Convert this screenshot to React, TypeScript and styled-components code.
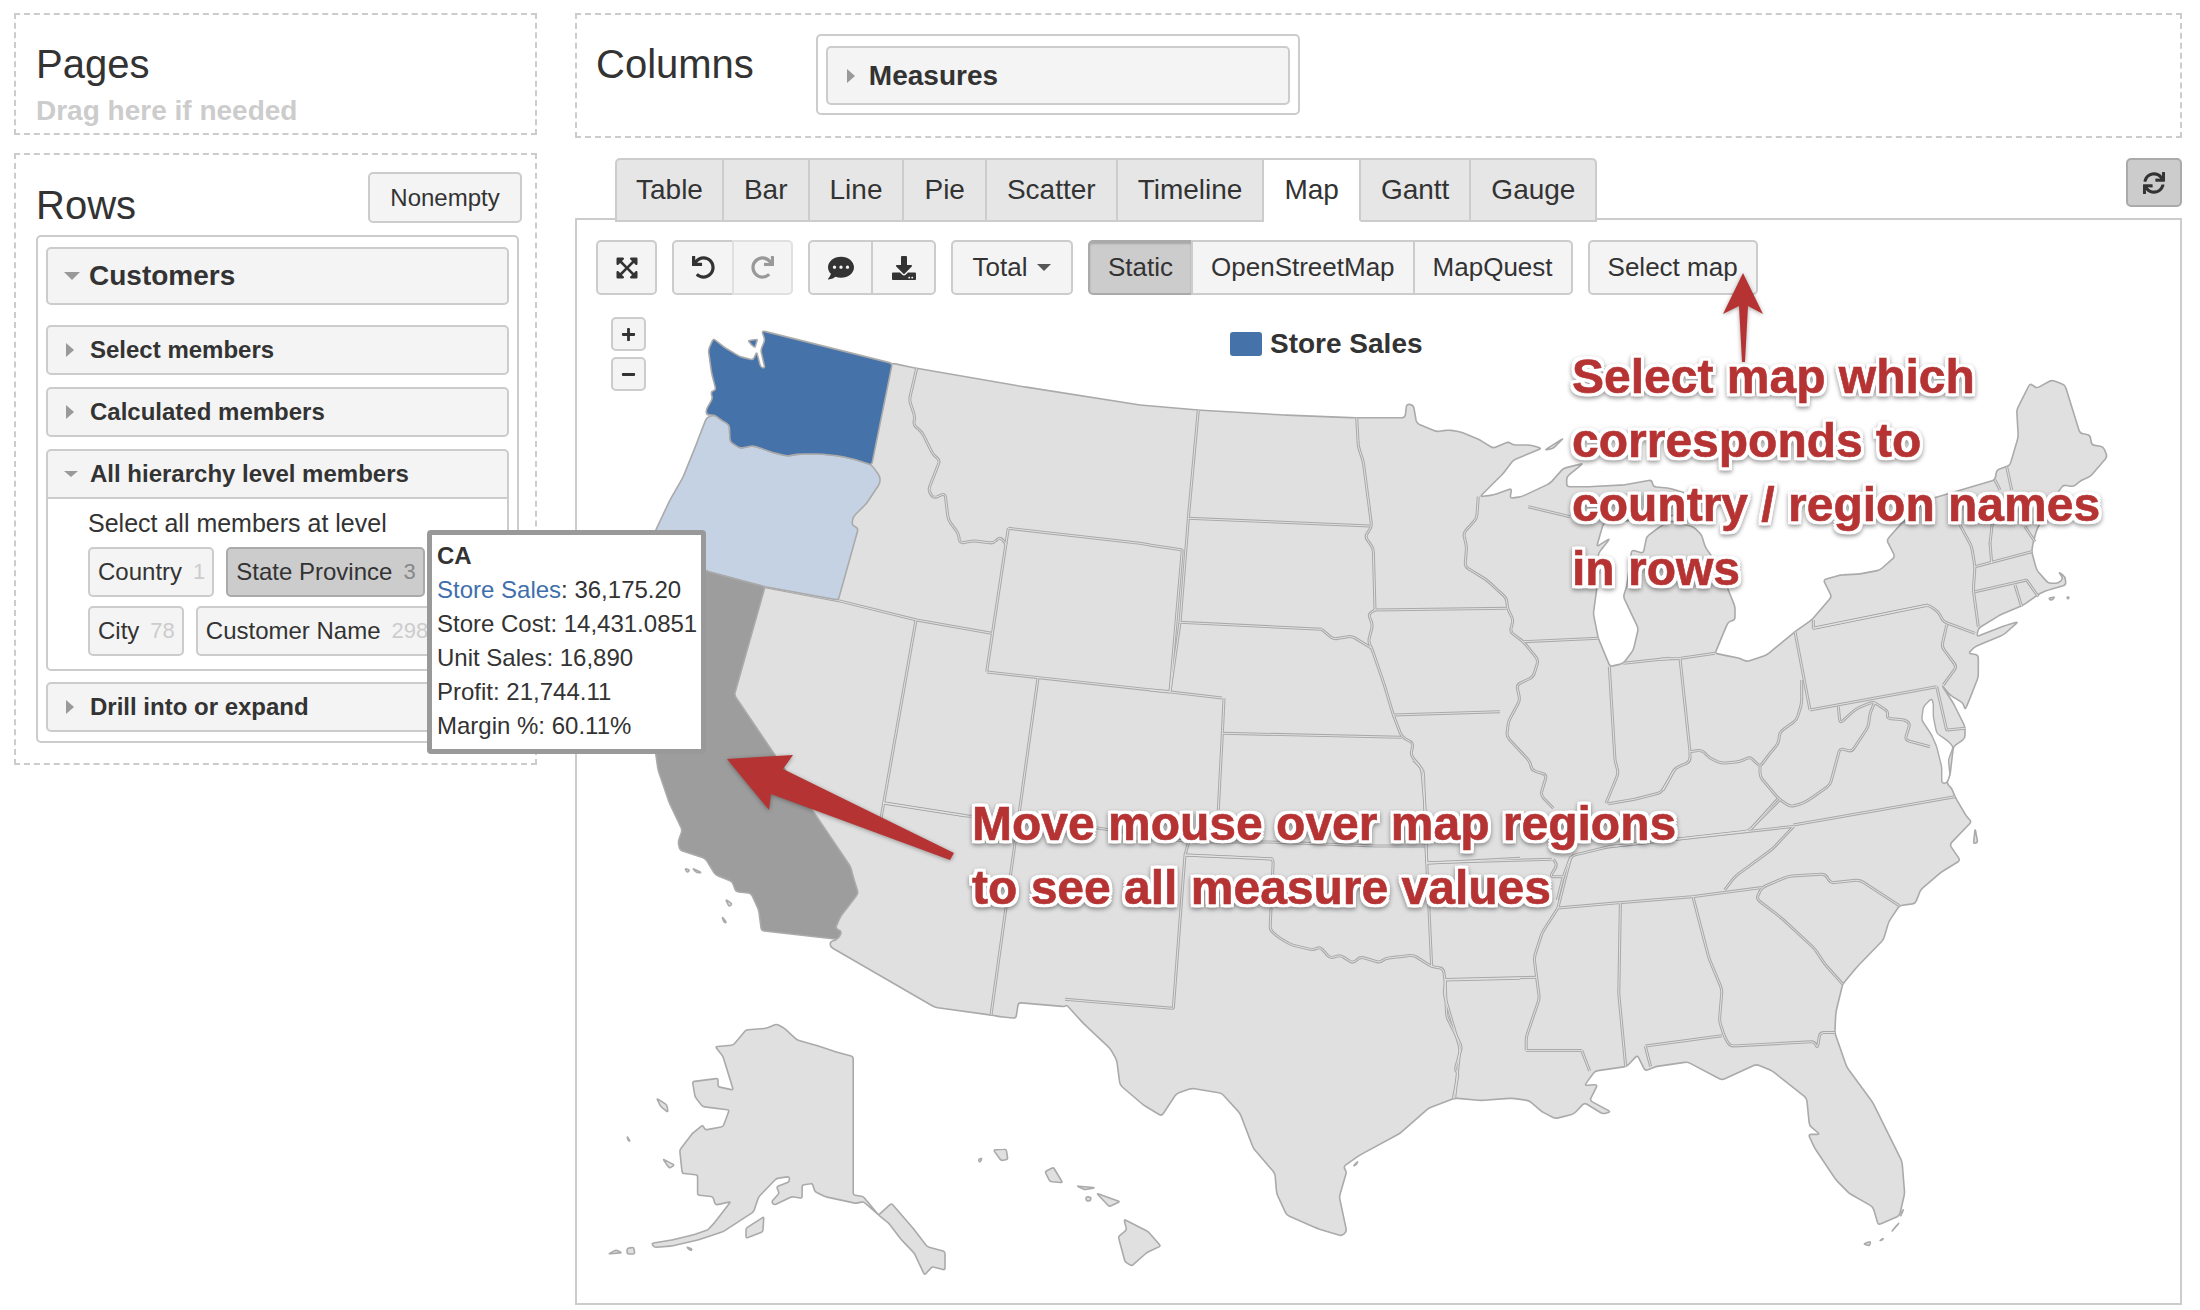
import React from "react";
import styled, { createGlobalStyle } from "styled-components";
import {
  FaCommentDots,
  FaDownload,
  FaExpandArrowsAlt,
  FaMinus,
  FaPlus,
  FaRedo,
  FaSync,
  FaUndo,
} from "react-icons/fa";

const GlobalStyle = createGlobalStyle`
  html, body {
    margin: 0;
    background: #fff;
    color: #333;
    font-family: "Liberation Sans", Arial, sans-serif;
  }
`;

const Page = styled.div`
  position: relative;
  width: 2200px;
  height: 1310px;
  padding: 13px 18px 0 14px;
  box-sizing: border-box;
  display: flex;
  gap: 38px;
  overflow: hidden;
`;

const LeftColumn = styled.div`
  width: 523px;
  display: flex;
  flex-direction: column;
  gap: 18px;
`;

const RightColumn = styled.div`
  width: 1607px;
  display: flex;
  flex-direction: column;
`;

const DropZone = styled.section`
  border: 2px dashed #ccc;
  box-sizing: border-box;
`;

const PagesZone = styled(DropZone)`
  height: 122px;
  padding: 26px 20px 0;
`;

const RowsZone = styled(DropZone)`
  height: 612px;
  padding: 17px 16px 0 20px;
`;

const ColumnsZone = styled(DropZone)`
  height: 125px;
  padding: 19px 19px 0;
  display: flex;
  gap: 62px;
`;

const ZoneTitle = styled.h3`
  margin: 0;
  font-size: 40px;
  line-height: 46px;
  font-weight: 400;
`;

const ColumnsTitle = styled(ZoneTitle)`
  margin-top: 7px;
`;

const DragHint = styled.div`
  margin-top: 9px;
  font-size: 28px;
  line-height: 30px;
  font-weight: 700;
  color: #ccc;
`;

const RowsHeader = styled.div`
  display: flex;
  justify-content: space-between;
  align-items: flex-start;
  margin-right: -3px;
  margin-bottom: 12px;
`;

const RowsTitle = styled(ZoneTitle)`
  margin: 10px 0 -5px;
`;

const NonemptyButton = styled.button`
  width: 154px;
  height: 51px;
  background: #f4f4f4;
  border: 2px solid #ccc;
  border-radius: 5px;
  font: 24px "Liberation Sans", Arial, sans-serif;
  color: #333;
`;

const Well = styled.div`
  border: 2px solid #ccc;
  border-radius: 5px;
  box-sizing: border-box;
  height: 508px;
  padding: 10px 8px;
  display: flex;
  flex-direction: column;
`;

const MeasuresWell = styled.div`
  width: 484px;
  height: 81px;
  border: 2px solid #ccc;
  border-radius: 5px;
  box-sizing: border-box;
  padding: 10px 8px;
`;

const Caret = styled.span<{ $open?: boolean; $big?: boolean }>`
  display: inline-block;
  width: 0;
  height: 0;
  flex: none;
  ${(p) =>
    p.$open
      ? `
    border-left: ${p.$big ? 8 : 7}px solid transparent;
    border-right: ${p.$big ? 8 : 7}px solid transparent;
    border-top: ${p.$big ? 8 : 6}px solid #999;
  `
      : `
    border-top: 7px solid transparent;
    border-bottom: 7px solid transparent;
    border-left: 8px solid #999;
    margin-left: 2px;
    margin-right: 4px;
  `}
`;

const Section = styled.div<{ $gap?: number }>`
  border: 2px solid #ccc;
  border-radius: 5px;
  background: #f4f4f4;
  box-sizing: border-box;
  margin-top: ${(p) => p.$gap ?? 12}px;
`;

const SectionHead = styled.div<{ $big?: boolean; $divided?: boolean }>`
  height: ${(p) => (p.$big ? 54 : 46)}px;
  display: flex;
  align-items: center;
  gap: ${(p) => (p.$big ? 9 : 12)}px;
  padding-left: 16px;
  font-size: ${(p) => (p.$big ? 28 : 24)}px;
  font-weight: 700;
  ${(p) => p.$divided && "border-bottom: 2px solid #ccc;"}
`;

const MeasuresHead = styled(SectionHead)`
  height: 55px;
  gap: 10px;
  font-size: 28px;
  padding-left: 17px;
`;

const SectionBody = styled.div`
  background: #fff;
  border-radius: 0 0 4px 4px;
  height: 170px;
  box-sizing: border-box;
  padding: 8px 0 0 40px;
`;

const LevelLabel = styled.div`
  font-size: 25px;
  line-height: 32px;
  margin-bottom: 8px;
`;

const ChipRow = styled.div`
  display: flex;
  gap: 12px;
  margin-bottom: 9px;
`;

const Chip = styled.div<{ $active?: boolean }>`
  height: 50px;
  box-sizing: border-box;
  padding: 0 7px 0 8px;
  border: 2px solid ${(p) => (p.$active ? "#aaa" : "#ccc")};
  border-radius: 5px;
  background: ${(p) => (p.$active ? "#ccc" : "#f4f4f4")};
  display: flex;
  align-items: center;
  gap: 11px;
  font-size: 24px;
  white-space: nowrap;
`;

const ChipCount = styled.span<{ $active?: boolean }>`
  font-size: 22px;
  color: ${(p) => (p.$active ? "#888" : "#ccc")};
`;

const TabBar = styled.div`
  margin-top: 20px;
  height: 60px;
  padding-left: 40px;
  display: flex;
  justify-content: space-between;
  align-items: flex-start;
`;

const Tabs = styled.div`
  display: flex;
  position: relative;
  z-index: 2;
`;

const Tab = styled.div<{ $active?: boolean }>`
  height: 60px;
  box-sizing: content-box;
  padding: 0 20px;
  display: flex;
  align-items: center;
  border: 2px solid #ccc;
  border-left-width: 0;
  border-bottom-color: ${(p) => (p.$active ? "#fff" : "#ccc")};
  background: ${(p) => (p.$active ? "#fff" : "#e6e6e6")};
  font-size: 28px;

  &:first-child {
    padding: 0 19px;
    border-left-width: 2px;
    border-top-left-radius: 5px;
  }
  &:last-child {
    border-top-right-radius: 5px;
  }
`;

const RefreshButton = styled.button`
  width: 56px;
  height: 49px;
  background: #ccc;
  border: 2px solid #aaa;
  border-radius: 5px;
  color: #333;
  font-size: 22px;
  display: flex;
  align-items: center;
  justify-content: center;
`;

const Panel = styled.div`
  position: relative;
  height: 1087px;
  border: 2px solid #ccc;
  box-sizing: border-box;
  padding: 20px 19px;
`;

const Toolbar = styled.div`
  position: relative;
  z-index: 1;
  display: flex;
  gap: 15px;
`;

const ButtonGroup = styled.div`
  display: flex;
  height: 55px;
`;

const ToolButton = styled.button<{ $active?: boolean; $muted?: boolean; $width?: number }>`
  height: 55px;
  ${(p) => (p.$width ? `width: ${p.$width}px; padding: 0;` : "padding: 0 18px;")}
  display: flex;
  align-items: center;
  justify-content: center;
  gap: 10px;
  box-sizing: border-box;
  background: ${(p) => (p.$active ? "#ccc" : "#f4f4f4")};
  border: 2px solid ${(p) => (p.$active ? "#aaa" : p.$muted ? "#e0e0e0" : "#ccc")};
  ${(p) => p.$active && "box-shadow: inset 0 2px 2px rgba(0, 0, 0, 0.18);"}
  color: ${(p) => (p.$muted ? "#999" : "#333")};
  font: 26px "Liberation Sans", Arial, sans-serif;
  border-radius: 5px;
  white-space: nowrap;

  ${ButtonGroup} > & {
    border-radius: 0;
    margin-left: -2px;
  }
  ${ButtonGroup} > &:first-child {
    border-radius: 5px 0 0 5px;
    margin-left: 0;
  }
  ${ButtonGroup} > &:last-child {
    border-radius: 0 5px 5px 0;
  }
`;

const CaretDown = styled.span`
  width: 0;
  height: 0;
  border-left: 7px solid transparent;
  border-right: 7px solid transparent;
  border-top: 7px solid #555;
`;

const MapCanvas = styled.svg`
  position: absolute;
  left: 0;
  top: 0;
  width: 1603px;
  height: 1083px;
`;

const Land = styled.path`
  fill: #e0e0e0;
  stroke: #aaa;
  stroke-width: 1.6;
  stroke-linejoin: round;
`;

const Region = styled.path<{ $fill: string }>`
  fill: ${(p) => p.$fill};
  stroke: #aaa;
  stroke-width: 1.6;
  stroke-linejoin: round;
`;

const Water = styled.path`
  fill: #fff;
  stroke: #aaa;
  stroke-width: 1.4;
  stroke-linejoin: round;
`;

const Border = styled.path`
  fill: none;
  stroke: #a9a9a9;
  stroke-width: 3;
  stroke-linejoin: round;
`;

const BorderCore = styled.path`
  fill: none;
  stroke: #e6e6e6;
  stroke-width: 0.9;
  stroke-linejoin: round;
`;

const ZoomControl = styled.div`
  position: absolute;
  z-index: 1;
  left: 34px;
  top: 97px;
  display: flex;
  flex-direction: column;
  gap: 6px;
`;

const ZoomButton = styled.button`
  width: 35px;
  height: 34px;
  padding: 0;
  background: #f4f4f4;
  border: 2px solid #ccc;
  border-radius: 5px;
  color: #333;
  font-size: 15px;
  display: flex;
  align-items: center;
  justify-content: center;
`;

const Legend = styled.div`
  position: absolute;
  left: 653px;
  top: 108px;
  display: flex;
  align-items: center;
  gap: 8px;
  font-size: 28px;
  font-weight: 700;
`;

const LegendSwatch = styled.span`
  width: 32px;
  height: 24px;
  border-radius: 3px;
  background: #4472a9;
`;

const ArrowLayer = styled.svg`
  position: absolute;
  z-index: 3;
  left: 0;
  top: 0;
  width: 1603px;
  height: 1083px;
  pointer-events: none;
  filter: drop-shadow(0 1px 2px rgba(0, 0, 0, 0.35));
`;

const Arrow = styled.polygon`
  fill: #b63333;
`;

const Note = styled.div<{ $left: number; $top: number }>`
  position: absolute;
  z-index: 4;
  left: ${(p) => p.$left}px;
  top: ${(p) => p.$top}px;
  font-size: 48px;
  line-height: 64px;
  font-weight: 700;
  white-space: pre;
  color: #b63333;
  -webkit-text-stroke: 0.6px #b63333;
  filter: drop-shadow(3px 0 0 #fff) drop-shadow(-3px 0 0 #fff) drop-shadow(0 3px 0 #fff)
    drop-shadow(0 -3px 0 #fff) drop-shadow(0 2px 2px rgba(0, 0, 0, 0.4));
`;

const Tooltip = styled.div`
  position: absolute;
  z-index: 5;
  left: 427px;
  top: 530px;
  width: 279px;
  height: 224px;
  box-sizing: border-box;
  background: #fff;
  border: 5px solid #999;
  border-radius: 4px;
  padding: 4px 0 0 5px;
  font-size: 24px;
  line-height: 34px;
  white-space: nowrap;
`;

const TooltipTitle = styled.div`
  font-weight: 700;
`;

const MeasureName = styled.span`
  color: #3f6fab;
`;

type Frame = [number, number, number, number];
type Pt = [number, number];

const Z5: Frame = [570, 800, 1.96, 3];
const Z6: Frame = [1370, 600, 1.889, 2.208];
const Z7: Frame = [1150, 390, 3, 3];
const Z8: Frame = [1660, 370, 3, 3];
const Z9: Frame = [1000, 760, 3, 3];
const Z11: Frame = [640, 330, 3, 3];
const PAGE: Frame = [0, 0, 1, 1];

// points are read off the zoomed crops, each frame maps a crop back to page pixels
const at = ([ox, oy, kx, ky]: Frame, s: string): Pt[] =>
  s
    .trim()
    .split(/\s+/)
    .map((p) => {
      const [x, y] = p.split(",").map(Number);
      return [ox + x / kx, oy + y / ky] as Pt;
    });

const f = (n: number) => n.toFixed(1);

// rounds each corner by at most r, long straight runs stay straight
const soft = (pts: Pt[], closed: boolean, r = 5): string => {
  const n = pts.length;
  const cut = (from: Pt, to: Pt): Pt => {
    const dx = to[0] - from[0];
    const dy = to[1] - from[1];
    const len = Math.hypot(dx, dy) || 1;
    const d = Math.min(r, len / 2);
    return [from[0] + (dx / len) * d, from[1] + (dy / len) * d];
  };
  let d = "";
  for (let i = 0; i < n; i++) {
    const p = pts[i];
    const prev = pts[(i - 1 + n) % n];
    const next = pts[(i + 1) % n];
    if (!closed && (i === 0 || i === n - 1)) {
      d += `${i === 0 ? "M" : "L"}${f(p[0])} ${f(p[1])}`;
      continue;
    }
    const a = cut(p, prev);
    const b = cut(p, next);
    d += `${d ? "L" : "M"}${f(a[0])} ${f(a[1])}Q${f(p[0])} ${f(p[1])} ${f(b[0])} ${f(b[1])}`;
  }
  return d + (closed ? "Z" : "");
};

const mainland = soft(
  [
    ...at(Z11, "757,100 830,115 1150,170 1500,225"),
    ...at(
      Z7,
      "145,60 400,75 610,83 620,83 765,83 770,42 790,45 800,100 860,125 895,120 930,125 990,150 1030,175 1075,155 1090,165 1140,165 1175,175 1090,210 1060,250 990,320 1030,315 1085,295 1080,325 1115,320 1200,280 1240,235 1300,220 1250,260 1250,290 1320,290 1420,285 1505,270 1510,290 1560,295 1640,320 1620,370 1500,385 1360,400 1340,470 1380,445 1345,490 1340,600 1330,670 1345,745 1380,830 1420,820 1450,780 1465,715 1420,620 1430,590 1445,480 1480,490 1490,440 1530,410 1560,392"
    ),
    ...at(
      Z8,
      "100,470 125,495 135,530 170,580 205,660 225,710 225,750 205,755 190,790 165,850 190,855 240,865 260,875 320,855 350,830 405,785 455,750 515,680 490,630 540,615 600,612 660,600 705,560 680,510 720,465 800,390 1005,330 1010,300 1040,290 1050,285 1075,200 1070,120 1110,40 1130,55 1175,30 1215,45 1260,190 1290,195 1295,225 1330,230 1342,260 1290,320 1265,330 1240,350 1210,345 1170,400 1130,480 1120,515 1115,545 1130,600 1165,640 1195,640 1210,625 1195,605 1215,620 1218,645 1165,660 1140,670 1090,705 1020,735 955,775 950,800 1040,765 1075,755 1030,795 945,830 925,850 955,855 955,920 930,985 915,1020 910,1000 870,975 845,945 880,1000 915,1070 915,1105 880,1130 870,1215 860,1240 875,1255 885,1280 920,1340 935,1355"
    ),
    ...at(
      Z6,
      "1095,540 1115,575 1080,600 1040,640 1030,670 1000,675 980,710 970,750 920,810 893,848 880,910 878,955 900,1030 950,1110 1005,1240 1010,1310 1000,1360 960,1380 950,1340 905,1310 880,1280 840,1210 828,1180 850,1180 830,1160 825,1100 760,1040 730,1025 665,1060 600,1020 540,1030 520,1040 505,1005 485,1030 425,1040 405,1072 430,1070 415,1105 455,1130 440,1135 405,1110 385,1135 350,1145 325,1130 300,1105 268,1100 210,1105 160,1100"
    ),
    ...at(
      Z9,
      "1285,1045 1200,1120 1080,1185 1030,1220 1040,1235 1018,1310 1040,1415 1025,1428 950,1405 860,1365 830,1300 825,1240 760,1165 720,1060 665,1000 575,985 530,1000 485,1068 430,1035 360,975 350,900 330,865 250,790 200,735 195,740 55,728 48,775 0,770"
    ),
    ...at(Z5, "825,645 715,622 510,440 510,425 525,418"),
    ...at(PAGE, "770,900 700,700 720,520 800,420"),
  ],
  true,
  3
);

const alaska = soft(
  at(
    Z5,
    "405,672 420,685 445,720 480,735 520,755 555,770 555,1185 575,1190 605,1245 630,1210 670,1280 700,1340 735,1355 735,1410 710,1400 695,1425 675,1360 650,1320 625,1270 605,1245 575,1205 560,1210 500,1190 480,1175 475,1150 455,1155 455,1195 435,1190 400,1215 395,1205 410,1180 405,1160 430,1145 430,1130 405,1135 370,1190 360,1235 300,1295 250,1320 200,1338 165,1342 160,1330 200,1320 240,1305 270,1290 285,1265 315,1205 285,1215 280,1190 250,1185 250,1125 220,1120 215,1050 240,1000 260,975 265,990 300,980 312,930 260,920 245,890 240,845 290,835 290,860 320,870 300,770 285,740 320,735 345,690 385,685"
  ),
  true,
  2
);

const islands = [
  at(Z5, "345,1285 380,1250 378,1295 345,1315"),
  at(Z5, "170,895 190,915 192,937 178,920"),
  at(Z5, "182,1077 205,1095 195,1105"),
  at(Z5, "112,1008 118,1025 113,1020"),
  at(Z5, "75,1362 90,1350 102,1358"),
  at(Z5, "112,1345 125,1342 127,1362 112,1362"),
  at(Z5, "228,1340 240,1348 236,1352"),
  at(Z5, "830,1050 855,1047 858,1078 845,1082"),
  at(Z5, "800,1078 808,1074 803,1088"),
  at(Z9, "135,1235 160,1222 188,1268 150,1265"),
  at(Z9, "230,1278 285,1283 255,1289"),
  at(Z9, "258,1310 274,1312 270,1324 258,1322"),
  at(Z9, "290,1300 360,1325 328,1340"),
  at(Z9, "372,1378 445,1415 482,1458 440,1478 395,1518 375,1505 355,1430 380,1410"),
  at(Z5, "225,205 235,210 230,218"),
  at(Z5, "240,205 258,218 248,218"),
  at(Z5, "305,298 318,312 312,320"),
  at(Z5, "298,350 307,368 302,368"),
  at(Z7, "1185,180 1240,145 1210,175"),
  at(Z8, "1165,685 1185,680 1175,692"),
  at(Z8, "1220,682 1228,680 1224,688"),
  at(Z6, "1143,505 1148,535 1140,538"),
  at(Z6, "1008,1345 1002,1362 1005,1350"),
  at(Z6, "1000,1375 985,1395 994,1382"),
  at(Z6, "932,1422 946,1416 944,1426"),
  at(Z6, "962,1415 970,1409 968,1413"),
  at(Z9, "1060,1218 1075,1203 1068,1215"),
].map((pts) => soft(pts, true, 2));

const chesapeake = soft(
  at(
    Z8,
    "815,985 790,1010 785,1050 815,1095 830,1130 845,1190 845,1240 860,1240 870,1215 865,1170 880,1130 860,1110 830,1090 820,1040 820,1000"
  ),
  true,
  3
);

const washington = soft(
  at(
    Z11,
    "365,2 757,100 695,405 650,390 600,378 540,372 480,372 440,378 400,368 340,347 300,355 270,335 268,285 240,268 225,255 200,255 198,240 218,205 212,185 228,180 215,130 205,60 220,25 250,50 300,80 340,90 350,65 362,112 375,115 362,60 375,30"
  ),
  true,
  3
);

const oregon = soft(
  at(
    Z11,
    "200,262 225,255 240,268 268,285 270,335 300,355 340,347 400,368 440,378 480,372 540,372 600,378 650,390 695,405 720,440 720,460 680,520 640,560 635,585 655,595 595,810 375,770 195,722 20,700 30,640 50,595 90,510 130,440 170,340"
  ),
  true,
  3
);

const california = soft(
  [
    ...at(Z11, "195,722 375,770 283,1095"),
    ...at(
      Z5,
      "550,200 555,230 565,280 550,310 530,350 520,385 533,395 525,418 375,392 370,330 355,280 325,275 318,245 285,225 265,175 215,150 212,125 220,90 195,10"
    ),
    ...at(PAGE, "658,770 640,640 645,560"),
  ],
  true,
  3
);

const sanJuan = soft(at(Z11, "325,32 352,28 345,52 335,45"), true, 1);

const straightBorders = [
  at(Z11, "375,770 595,812 830,870 1055,910"),
  at(Z11, "828,870 722,1470"),
  at(Z11, "1105,595 1500,640"),
  [...at(Z11, "1500,640"), ...at(Z7, "0,465 97,480 60,905 0,900")],
  at(Z11, "1105,595 1040,1025"),
  at(PAGE, "987,672 1170,692 1222,698"),
  at(Z11, "730,1418 980,1458"),
  at(PAGE, "883,803 967,816 1098,828 1190,842 1267,842 1377,846 1427,846"),
  at(PAGE, "1038,678 991,1015"),
  at(Z7, "145,60 115,385 90,697 60,905"),
  at(Z7, "115,385 660,408"),
  at(Z7, "90,697 515,718"),
  at(Z7, "675,660 1070,655"),
  at(Z7, "730,975 1050,965"),
  at(Z7, "217,1030 755,1042"),
  at(Z7, "222,925 217,1030 205,1260"),
  at(Z7, "1120,755 1345,745"),
  at(Z7, "1135,350 1260,380"),
  at(Z7, "1378,830 1395,1110"),
  at(Z7, "1420,820 1560,805"),
  at(Z8, "0,868 60,865 165,850"),
  at(Z8, "60,865 90,1145"),
  at(Z8, "405,785 450,1020"),
  at(Z8, "450,1020 830,950"),
  at(Z8, "830,950 860,1080 915,1075"),
  at(Z8, "460,750 460,775 805,705"),
  at(Z8, "885,1280 400,1365"),
  at(Z8, "945,590 1115,545"),
  at(Z8, "945,665 1100,630 1135,680"),
  at(Z8, "1065,645 1085,710"),
  at(Z8, "1005,330 1020,360"),
  at(Z8, "997,460 990,520 995,580"),
  at(Z9, "555,285 820,297"),
  at(Z9, "565,250 555,285 520,745 195,718"),
  at(Z9, "1280,310 1560,295"),
  at(Z7, "830,1418 1205,1408"),
  at(Z9, "1335,660 1560,655"),
  at(Z6, "143,838 315,833"),
  at(Z6, "355,680 475,668 610,655 740,635"),
  at(Z6, "473,668 470,870 483,1030"),
  at(Z6, "520,985 530,1030"),
  at(Z6, "520,985 665,962"),
  at(Z6, "295,995 400,995"),
  at(Z6, "800,500 450,545"),
];

const riverBorders = [
  at(
    Z11,
    "830,115 808,210 825,260 820,285 845,305 880,375 900,390 865,480 880,505 915,490 925,570 955,610 960,640 1000,632 1060,640 1080,620 1100,645"
  ),
  at(Z7, "515,718 550,748 605,738 665,775"),
  at(Z7, "620,83 625,170 640,215 660,370 665,410 645,440 670,475 675,660"),
  at(Z7, "675,660 655,672 668,705 655,755 665,775 700,875 730,975 755,1040 790,1060 782,1095 815,1135 825,1250 830,1420"),
  at(Z7, "985,320 980,385 940,430 950,470 945,530 1010,570 1070,625 1072,655 1090,690 1080,725 1120,755 1165,810 1150,860 1100,885 1110,930 1075,995 1070,1040 1140,1115 1145,1140 1190,1155 1172,1215 1210,1255"),
  at(Z7, "1395,1110 1405,1150 1368,1240"),
  at(Z7, "1210,1408 1222,1425 1200,1460 1240,1460"),
  at(Z7, "1262,1400 1240,1460 1222,1530"),
  at(Z8, "90,1145 90,1175 45,1195 10,1260"),
  at(Z6, "575,375 550,425 500,440 450,450"),
  at(Z8, "90,1145 125,1140 150,1165 185,1180 240,1175 270,1160 300,1190 330,1150 355,1120 360,1085 410,1050 425,1000 425,930"),
  at(Z8, "460,775 805,705 835,725 850,755 945,790"),
  at(Z8, "860,765 845,830 890,890 850,945"),
  at(Z8, "535,1010 540,1060 590,1015 640,995 685,1025 680,1045 735,1050 750,1060 735,1110 810,1130"),
  at(Z8, "645,995 630,1030 625,1070 575,1145 540,1135 510,1245 460,1280 430,1300 390,1310 355,1285 300,1220 300,1190"),
  at(Z8, "355,1285 270,1380"),
  at(Z8, "900,465 935,530 945,590 940,660 955,770"),
  at(Z8, "1040,290 1055,360"),
  at(Z8, "1095,470 1125,515"),
  at(Z6, "775,440 715,510 450,545 380,565 370,610 355,680"),
  at(Z6, "800,500 760,550 690,610 670,640"),
  at(Z6, "355,680 325,735 310,790 320,880 295,965 295,995"),
  at(Z6, "400,995 415,1040"),
  at(Z6, "610,655 640,790 665,860 660,930 670,965 680,985 840,975 845,990 850,955 878,955"),
  at(Z6, "893,848 860,805 840,770 775,700 730,660 740,635 790,610 860,605 870,625 925,618 1000,675"),
  at(Z6, "160,1100 170,990 140,870 143,838"),
  at(
    Z9,
    "555,285 820,297 810,510 840,535 875,555 940,570 960,560 990,595 1020,585 1060,610 1080,590 1140,608 1155,595 1200,590 1240,585 1295,620 1330,625 1335,660 1340,770 1385,860 1365,930 1375,940 1360,1015"
  ),
  at(Z9, "1240,0 1270,30 1280,305 1295,620"),
];

const borderPaths = [
  ...straightBorders.map((b) => soft(b, false, 1)),
  ...riverBorders.map((b) => soft(b, false, 4)),
];

const TAB_NAMES = ["Table", "Bar", "Line", "Pie", "Scatter", "Timeline", "Map", "Gantt", "Gauge"];

const USMap = () => (
  <MapCanvas viewBox="577 220 1603 1083">
    <Land d={mainland} />
    <Land d={alaska} />
    {islands.map((d, i) => (
      <Land key={i} d={d} />
    ))}
    <Water d={chesapeake} />
    {borderPaths.map((d, i) => (
      <Border key={i} d={d} />
    ))}
    {borderPaths.map((d, i) => (
      <BorderCore key={i} d={d} />
    ))}
    <Region $fill="#c4d2e4" d={oregon} />
    <Region $fill="#9d9d9d" d={california} />
    <Region $fill="#4472a9" d={washington} />
    <Region $fill="#4472a9" d={sanJuan} />
  </MapCanvas>
);

const App = () => (
  <Page>
    <GlobalStyle />
    <LeftColumn>
      <PagesZone>
        <ZoneTitle>Pages</ZoneTitle>
        <DragHint>Drag here if needed</DragHint>
      </PagesZone>
      <RowsZone>
        <RowsHeader>
          <RowsTitle>Rows</RowsTitle>
          <NonemptyButton>Nonempty</NonemptyButton>
        </RowsHeader>
        <Well>
          <Section $gap={0}>
            <SectionHead $big>
              <Caret $open $big />
              Customers
            </SectionHead>
          </Section>
          <Section $gap={20}>
            <SectionHead>
              <Caret />
              Select members
            </SectionHead>
          </Section>
          <Section>
            <SectionHead>
              <Caret />
              Calculated members
            </SectionHead>
          </Section>
          <Section>
            <SectionHead $divided>
              <Caret $open />
              All hierarchy level members
            </SectionHead>
            <SectionBody>
              <LevelLabel>Select all members at level</LevelLabel>
              <ChipRow>
                <Chip>
                  Country <ChipCount>1</ChipCount>
                </Chip>
                <Chip $active>
                  State Province <ChipCount $active>3</ChipCount>
                </Chip>
              </ChipRow>
              <ChipRow>
                <Chip>
                  City <ChipCount>78</ChipCount>
                </Chip>
                <Chip>
                  Customer Name <ChipCount>298</ChipCount>
                </Chip>
              </ChipRow>
            </SectionBody>
          </Section>
          <Section $gap={11}>
            <SectionHead>
              <Caret />
              Drill into or expand
            </SectionHead>
          </Section>
        </Well>
      </RowsZone>
    </LeftColumn>

    <RightColumn>
      <ColumnsZone>
        <ColumnsTitle>Columns</ColumnsTitle>
        <MeasuresWell>
          <Section $gap={0}>
            <MeasuresHead>
              <Caret />
              Measures
            </MeasuresHead>
          </Section>
        </MeasuresWell>
      </ColumnsZone>

      <TabBar>
        <Tabs>
          {TAB_NAMES.map((name) => (
            <Tab key={name} $active={name === "Map"}>
              {name}
            </Tab>
          ))}
        </Tabs>
        <RefreshButton>
          <FaSync />
        </RefreshButton>
      </TabBar>

      <Panel>
        <USMap />
        <Toolbar>
          <ToolButton $width={61}>
            <FaExpandArrowsAlt size={24} />
          </ToolButton>
          <ButtonGroup>
            <ToolButton $width={62}>
              <FaUndo size={23} />
            </ToolButton>
            <ToolButton $width={61} $muted>
              <FaRedo size={23} />
            </ToolButton>
          </ButtonGroup>
          <ButtonGroup>
            <ToolButton $width={65}>
              <FaCommentDots size={26} />
            </ToolButton>
            <ToolButton $width={65}>
              <FaDownload size={24} />
            </ToolButton>
          </ButtonGroup>
          <ToolButton $width={122}>
            Total
            <CaretDown />
          </ToolButton>
          <ButtonGroup>
            <ToolButton $active>Static</ToolButton>
            <ToolButton>OpenStreetMap</ToolButton>
            <ToolButton>MapQuest</ToolButton>
          </ButtonGroup>
          <ToolButton>Select map</ToolButton>
        </Toolbar>
        <ZoomControl>
          <ZoomButton>
            <FaPlus />
          </ZoomButton>
          <ZoomButton>
            <FaMinus />
          </ZoomButton>
        </ZoomControl>
        <Legend>
          <LegendSwatch />
          Store Sales
        </Legend>
        <ArrowLayer viewBox="577 220 1603 1083">
          <Arrow points="1743,273 1763,314 1748,306 1745,362 1742,362 1739,306 1723,314" />
          <Arrow points="727,759 793,755 783,769 954,853 950,860 771,794 769,810" />
        </ArrowLayer>
        <Note $left={995} $top={125}>
          {"Select map which\ncorresponds to\ncountry / region names\nin rows"}
        </Note>
        <Note $left={395} $top={572}>
          {"Move mouse over map regions\nto see all measure values"}
        </Note>
      </Panel>
    </RightColumn>

    <Tooltip>
      <TooltipTitle>CA</TooltipTitle>
      <div>
        <MeasureName>Store Sales</MeasureName>: 36,175.20
      </div>
      <div>Store Cost: 14,431.0851</div>
      <div>Unit Sales: 16,890</div>
      <div>Profit: 21,744.11</div>
      <div>Margin %: 60.11%</div>
    </Tooltip>
  </Page>
);

export default App;
